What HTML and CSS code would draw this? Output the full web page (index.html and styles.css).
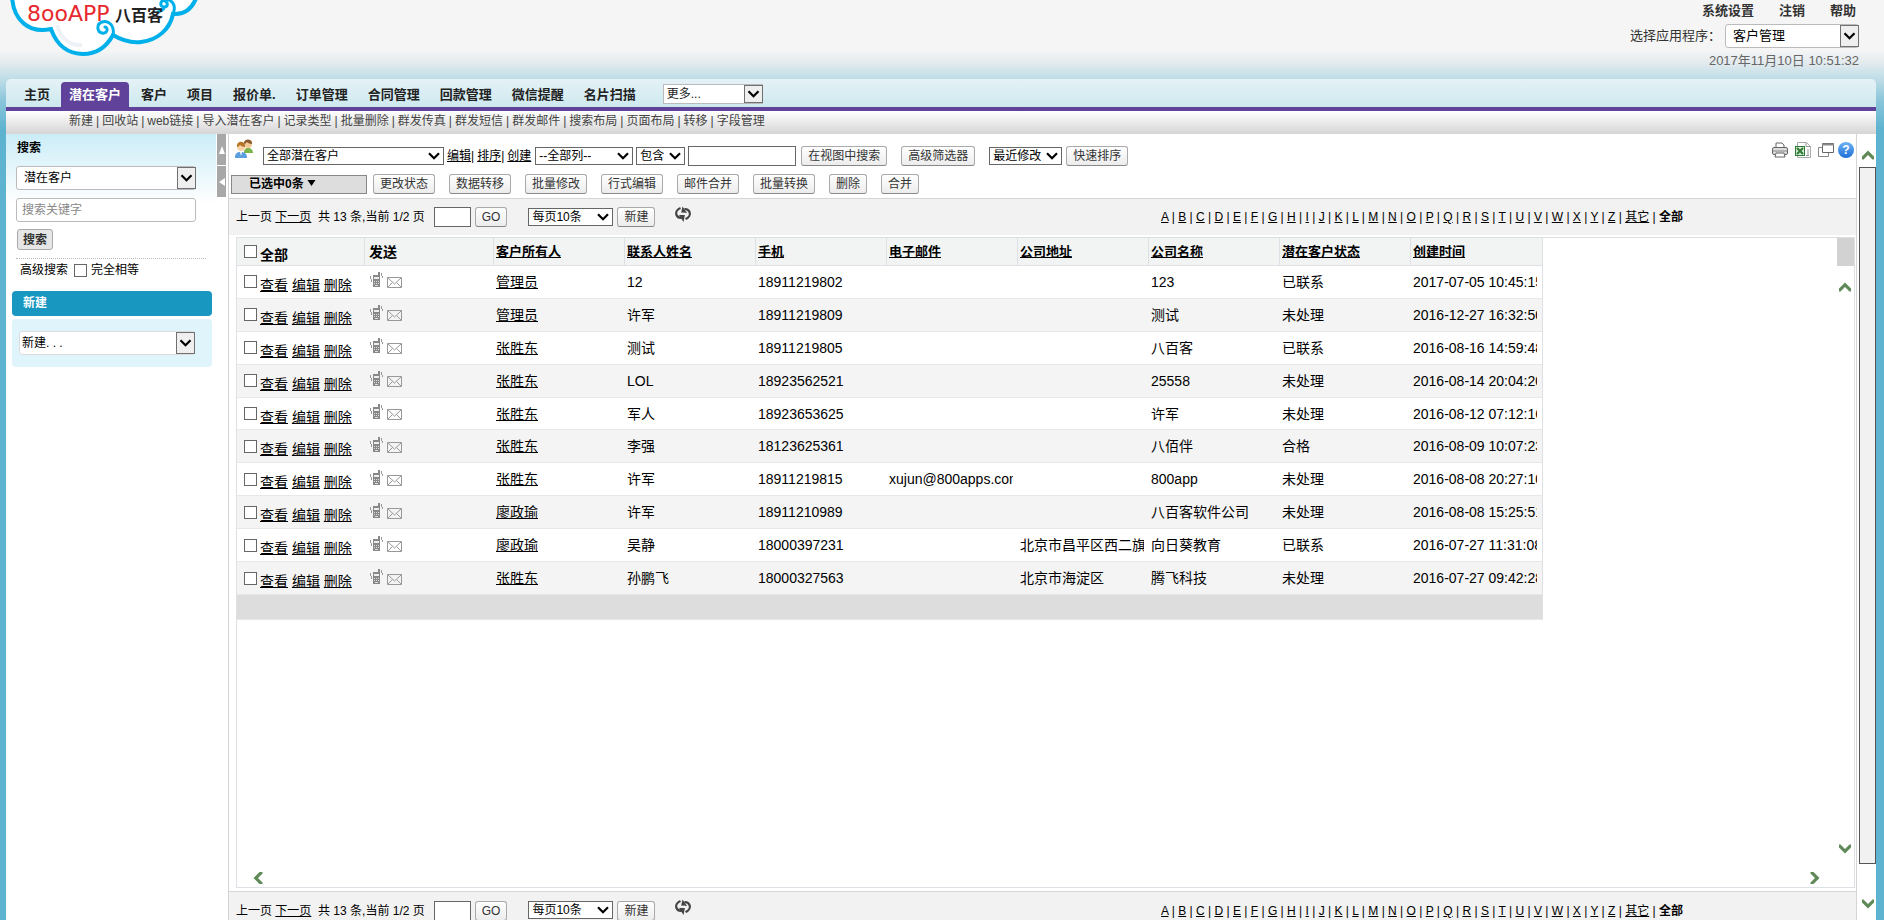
FILE: index.html
```html
<!DOCTYPE html>
<html lang="zh-CN">
<head>
    <meta charset="UTF-8">
    <meta name="viewport" content="width=device-width, initial-scale=1.0">
    <title>潜在客户 - 客户管理</title>
    <link rel="stylesheet" href="styles.css">
</head>
<body>
    <svg class="defs" aria-hidden="true">
        <symbol id="chevron" viewBox="0 0 12 8"><path d="M1 1.2l5 5 5-5" fill="none" stroke="#000" stroke-width="2.2"/></symbol>
        <symbol id="arrow" viewBox="0 0 12 10"><path d="M0 9.5V6.5L6 .5l6 6v3h-1.5L6 5 1.5 9.5z" fill="#5f8a58"/></symbol>
        <symbol id="phone" viewBox="0 0 13 16">
            <path d="M3 3h5V0h2v15H3z" fill="#888"/>
            <path d="M4 5h5v2H4z" fill="#eee"/>
            <path d="M4 9.500h1M6 9.500h1M8 9.500h1M4 11.500h1M6 11.500h1M8 11.500h1M5 13.500h3" stroke="#ddd"/>
            <path d="M.500 4v3M1.500 7v3M11.500 1v3M12.500 4v2" stroke="#999"/>
        </symbol>
        <symbol id="mail" viewBox="0 0 15 11"><path d="M.5.5h14v10H.5zM1 1l6.500 6L14 1M1 10l4.500-4.500M14 10L9.500 5.500" fill="none" stroke="#999"/></symbol>
        <symbol id="refresh" viewBox="0 0 16 16">
            <path d="M5.500 2C2 3.500.500 6.500 1.500 9c.8 2 2.500 3 5 2.800" fill="none" stroke="#444" stroke-width="2.200"/>
            <path d="M10.500 13c3.500-1.500 5-4.500 4-7-.8-2-2.500-3-5-2.800" fill="none" stroke="#444" stroke-width="2.200"/>
            <path d="M4 8.500l6-.5-1.500 7.500zM12 6.500L6 7 7.500 0z" fill="#444" transform="translate(0 .5)"/>
            <path d="M5.500 7.800h5" stroke="#f2f2f2" stroke-width="2.400"/>
        </symbol>
    </svg>

    <header class="top">
        <svg class="logo" viewBox="0 0 200 60" role="img" aria-label="800APP八百客">
            <path d="M12-4C13 20 29 34 51 29C57 46 69 54 83 54S107 46 113 35C123 41 133 43 141 42C158 40 170 29 173 14C184 15 192 10 197-4" fill="#fff" stroke="#00b0ea" stroke-width="4"/>
            <path d="M57 25C60 38 70 46 82 45" fill="none" stroke="#eef2f6" stroke-width="4"/>
            <g fill="none" stroke="#00b0ea" stroke-width="3" stroke-linecap="round">
                <path d="M113 35C115 25 108 20 102 22s-5 10 0 11 7-5 3-6"/>
                <path d="M173 14C177 4 171-1 165 0s-5 7-1 7 4-4 2-5M158 12c3-1 5-2 6-4"/>
            </g>
            <text class="logo-latin" x="27" y="21">8ooAPP</text>
            <text class="logo-cn" x="115" y="21">八百客</text>
        </svg>
        <div class="account">
            <nav class="account-links">
                <a href="#">系统设置</a>
                <a href="#">注销</a>
                <a href="#">帮助</a>
            </nav>
            <div class="app-choice">
                <label for="app">选择应用程序：</label>
                <span class="select boxed app-select">
                    <select id="app"><option>客户管理</option></select>
                    <svg><use href="#chevron"/></svg>
                </span>
            </div>
            <time>2017年11月10日 10:51:32</time>
        </div>
    </header>

    <div class="frame">
        <nav class="tabs">
            <a href="#">主页</a>
            <a href="#" class="active">潜在客户</a>
            <a href="#">客户</a>
            <a href="#">项目</a>
            <a href="#">报价单.</a>
            <a href="#">订单管理</a>
            <a href="#">合同管理</a>
            <a href="#">回款管理</a>
            <a href="#">微信提醒</a>
            <a href="#">名片扫描</a>
            <span class="select boxed more-select">
                <select aria-label="更多"><option>更多...</option></select>
                <svg><use href="#chevron"/></svg>
            </span>
        </nav>
        <nav class="subnav">
            <a href="#">新建</a> | <a href="#">回收站</a> | <a href="#">web链接</a> | <a href="#">导入潜在客户</a> | <a href="#">记录类型</a> | <a href="#">批量删除</a> | <a href="#">群发传真</a> | <a href="#">群发短信</a> | <a href="#">群发邮件</a> | <a href="#">搜索布局</a> | <a href="#">页面布局</a> | <a href="#">转移</a> | <a href="#">字段管理</a>
        </nav>

        <div class="body">
            <aside class="sidebar">
                <form class="search">
                    <h2>搜索</h2>
                    <span class="select boxed side-select">
                        <select aria-label="搜索对象"><option>潜在客户</option></select>
                        <svg><use href="#chevron"/></svg>
                    </span>
                    <input type="text" class="keyword" placeholder="搜索关键字" aria-label="搜索关键字">
                    <button type="button" class="search-btn">搜索</button>
                    <div class="search-more">
                        <a href="#">高级搜索</a>
                        <label><input type="checkbox">完全相等</label>
                    </div>
                </form>
                <h2 class="side-title">新建</h2>
                <div class="side-box">
                    <span class="select boxed new-select">
                        <select aria-label="新建"><option>新建. . .</option></select>
                        <svg><use href="#chevron"/></svg>
                    </span>
                </div>
            </aside>
            <div class="toggles">
                <button type="button" aria-label="收起顶部"><svg viewBox="0 0 6 8"><path d="M3 0l3 8H0z" fill="#fff"/></svg></button>
                <button type="button" aria-label="收起侧栏"><svg viewBox="0 0 6 8"><path d="M0 4l6-4v8z" fill="#fff"/></svg></button>
            </div>

            <main class="content">
                <div class="toolbar">
                    <div class="tool-row">
                        <svg class="users" viewBox="0 0 18 20">
                            <path d="M9 14c0-3 1-5 4-5s5 2 5 5z" fill="#7ab648"/>
                            <circle cx="13" cy="5" r="4" fill="#f3c99a"/>
                            <path d="M9 5c-1-6 9-6 8 0-2 0-4-1-5-2-1 1-2 2-3 2z" fill="#8a5a2b"/>
                            <path d="M0 19c0-5 2-6 6-6s6 2 6 6z" fill="#5b9fe0"/>
                            <circle cx="6" cy="8" r="4" fill="#f8d3a6"/>
                            <path d="M2 8c-1-7 9-7 8 0-2 0-4-1-5-2-1 1-2 2-3 2z" fill="#b5762a"/>
                            <path d="M5 13h2l-1 4z" fill="#fff"/>
                        </svg>
                        <span class="select view-select">
                            <select aria-label="视图"><option>全部潜在客户</option></select>
                            <svg><use href="#chevron"/></svg>
                        </span>
                        <span><a href="#">编辑</a>|</span>
                        <span><a href="#">排序</a>|</span>
                        <a href="#">创建</a>
                        <span class="select column-select">
                            <select aria-label="列"><option>--全部列--</option></select>
                            <svg><use href="#chevron"/></svg>
                        </span>
                        <span class="select match-select">
                            <select aria-label="条件"><option>包含</option></select>
                            <svg><use href="#chevron"/></svg>
                        </span>
                        <input type="text" class="filter" aria-label="筛选内容">
                        <button type="button" class="btn">在视图中搜索</button>
                        <button type="button" class="btn advanced">高级筛选器</button>
                        <span class="select recent-select">
                            <select aria-label="排序方式"><option>最近修改</option></select>
                            <svg><use href="#chevron"/></svg>
                        </span>
                        <button type="button" class="btn">快速排序</button>
                        <div class="page-icons">
                            <a href="#" aria-label="打印"><svg viewBox="0 0 16 16"><path d="M4 6V1h6l2 2v3" fill="#fff" stroke="#666"/><rect x=".5" y="5.500" width="15" height="7" rx="1.500" fill="#ddd" stroke="#666"/><path d="M1 9h14" stroke="#888"/><path d="M4 11h8l1 4H3z" fill="#fff" stroke="#666"/></svg></a>
                            <a href="#" aria-label="导出Excel"><svg viewBox="0 0 16 16"><path d="M2.500.5h9l4 4v11h-13z" fill="#fff" stroke="#aaa"/><path d="M11 .5v4h4.500M13 7v7M11 13.500h3" fill="none" stroke="#999"/><path d="M0 4h10v10H0z" fill="#2f7a35"/><path d="M1 5h8v8H1z" fill="#d5e8d5"/><path d="M2 6l6 6M8 6l-6 6" stroke="#2f7a35" stroke-width="2"/></svg></a>
                            <a href="#" aria-label="新窗口"><svg viewBox="0 0 16 16"><path d="M.5 5.500h10v9H.5z" fill="#fff" stroke="#888"/><path d="M4.500 1.500h11v9h-11z" fill="#fff" stroke="#666"/><path d="M4 2.500h12" stroke="#888" stroke-width="2"/></svg></a>
                            <a href="#" class="help" aria-label="帮助">?</a>
                        </div>
                    </div>
                    <div class="tool-row actions">
                        <button type="button" class="selected">已选中0条 <svg viewBox="0 0 8 6"><path d="M0 0h8L4 6z"/></svg></button>
                        <button type="button" class="btn">更改状态</button>
                        <button type="button" class="btn">数据转移</button>
                        <button type="button" class="btn">批量修改</button>
                        <button type="button" class="btn">行式编辑</button>
                        <button type="button" class="btn">邮件合并</button>
                        <button type="button" class="btn">批量转换</button>
                        <button type="button" class="btn">删除</button>
                        <button type="button" class="btn">合并</button>
                    </div>
                </div>

                <div class="pager"></div>

                <div class="grid">
                    <table>
                        <colgroup>
                            <col class="col-actions"><col class="col-send">
                            <col><col><col><col><col><col><col><col>
                        </colgroup>
                        <thead>
                            <tr>
                                <th class="pick"><label><input type="checkbox"><span>全部</span></label></th>
                                <th class="send">发送</th>
                                <th><a href="#">客户所有人</a></th>
                                <th><a href="#">联系人姓名</a></th>
                                <th><a href="#">手机</a></th>
                                <th><a href="#">电子邮件</a></th>
                                <th><a href="#">公司地址</a></th>
                                <th><a href="#">公司名称</a></th>
                                <th><a href="#">潜在客户状态</a></th>
                                <th><a href="#">创建时间</a></th>
                            </tr>
                        </thead>
                        <tbody id="rows"></tbody>
                        <tfoot><tr><td colspan="10"></td></tr></tfoot>
                    </table>
                    <span class="grid-corner"></span>
                    <svg class="arrow grid-up"><use href="#arrow"/></svg>
                    <svg class="arrow down grid-down"><use href="#arrow"/></svg>
                    <svg class="arrow left grid-left"><use href="#arrow"/></svg>
                    <svg class="arrow right grid-right"><use href="#arrow"/></svg>
                </div>

                <div class="pager bottom"></div>
            </main>

            <div class="scrollbar">
                <svg class="arrow"><use href="#arrow"/></svg>
                <div class="thumb"></div>
                <svg class="arrow down"><use href="#arrow"/></svg>
            </div>
        </div>
    </div>

    <script>
        const leads = [
            ["管理员", "12", "18911219802", "", "", "123", "已联系", "2017-07-05 10:45:15"],
            ["管理员", "许军", "18911219809", "", "", "测试", "未处理", "2016-12-27 16:32:50"],
            ["张胜东", "测试", "18911219805", "", "", "八百客", "已联系", "2016-08-16 14:59:48"],
            ["张胜东", "LOL", "18923562521", "", "", "25558", "未处理", "2016-08-14 20:04:20"],
            ["张胜东", "军人", "18923653625", "", "", "许军", "未处理", "2016-08-12 07:12:16"],
            ["张胜东", "李强", "18123625361", "", "", "八佰伴", "合格", "2016-08-09 10:07:23"],
            ["张胜东", "许军", "18911219815", "xujun@800apps.com", "", "800app", "未处理", "2016-08-08 20:27:10"],
            ["廖政瑜", "许军", "18911210989", "", "", "八百客软件公司", "未处理", "2016-08-08 15:25:51"],
            ["廖政瑜", "吴静", "18000397231", "", "北京市昌平区西二旗", "向日葵教育", "已联系", "2016-07-27 11:31:08"],
            ["张胜东", "孙鹏飞", "18000327563", "", "北京市海淀区", "腾飞科技", "未处理", "2016-07-27 09:42:28"]
        ];

        document.getElementById("rows").innerHTML = leads.map(([owner, ...cells]) => `
            <tr>
                <td class="pick"><div>
                    <input type="checkbox" aria-label="选择">
                    <span><a href="#">查看</a> <a href="#">编辑</a> <a href="#">删除</a></span>
                </div></td>
                <td class="send"><svg class="phone"><use href="#phone"/></svg><svg class="mail"><use href="#mail"/></svg></td>
                <td><a href="#">${owner}</a></td>
                ${cells.map(c => `<td><div class="clip">${c}</div></td>`).join("")}
            </tr>`).join("");

        // The same pager sits above and below the list
        const letters = [..."ABCDEFGHIJKLMNOPQRSTUVWXYZ", "其它"].map(l => `<a href="#">${l}</a>`).join(" | ");
        document.querySelectorAll(".pager").forEach(pager => {
            pager.innerHTML = `
                <span>上一页 <a href="#">下一页</a>&nbsp; 共 13 条,当前 1/2 页</span>
                <input type="text" class="page-no" aria-label="页码">
                <button type="button" class="btn">GO</button>
                <span class="select size-select">
                    <select aria-label="每页条数"><option>每页10条</option></select>
                    <svg><use href="#chevron"/></svg>
                </span>
                <button type="button" class="btn">新建</button>
                <a href="#" class="refresh" aria-label="刷新"><svg><use href="#refresh"/></svg></a>
                <div class="letters">${letters} | <b>全部</b></div>`;
        });
    </script>
</body>
</html>
```
FILE: styles.css
```css
* {
    box-sizing: border-box;
}
body {
    margin: 0;
    height: 100vh;
    overflow: hidden;
    display: flex;
    flex-direction: column;
    font: 12px/16px "Liberation Sans", "Noto Sans CJK SC", sans-serif;
    color: #000;
    background: linear-gradient(#f5f5f5 50px, #e4ebee 62px, #bfdde7 79px, #8cc6db 100px, #5db3d0 130px);
}
a {
    color: inherit;
}
input, select, button {
    font: inherit;
    color: inherit;
    margin: 0;
}
input[type="checkbox"] {
    appearance: none;
    flex: none;
    width: 13px;
    height: 13px;
    border: 1px solid #666;
    background: #fff;
}
.defs {
    position: absolute;
    width: 0;
    height: 0;
}

/* selects */
.select {
    position: relative;
    display: inline-flex;
    flex: none;
    height: 18px;
}
.select select {
    appearance: none;
    width: 100%;
    padding: 0 3px;
    border: 1px solid #666;
    border-radius: 0;
    background: #fff;
}
.select svg {
    position: absolute;
    right: 4px;
    top: 5px;
    width: 12px;
    height: 8px;
    pointer-events: none;
}
.boxed {
    height: 24px;
}
.boxed select {
    border: 1px solid #bbb;
    border-radius: 3px;
}
.boxed svg {
    right: 0;
    top: 1px;
    width: 19px;
    height: 22px;
    padding: 6px 2px;
    border: 1px solid #707070;
    background: #efefef;
}

/* header */
.top {
    display: flex;
    justify-content: space-between;
    height: 79px;
    flex: none;
}
.logo {
    width: 200px;
    height: 60px;
}
.logo-latin {
    font: 22px "DejaVu Sans", sans-serif;
    fill: #e8282d;
}
.logo-cn {
    font: bold 16px "Noto Sans CJK SC", sans-serif;
    fill: #222;
}
.account {
    display: flex;
    flex-direction: column;
    align-items: flex-end;
    padding: 3px 25px 0 0;
    font-size: 13px;
    color: #333;
}
.account-links {
    display: flex;
    gap: 25px;
    padding-right: 3px;
    font-weight: bold;
}
.account-links a {
    text-decoration: none;
}
.app-choice {
    display: flex;
    align-items: center;
    gap: 4px;
    margin: 5px 0;
}
.app-select {
    width: 134px;
}
.app-select select {
    padding-left: 7px;
    color: #000;
}
.account time {
    color: #666;
}

/* tabs */
.frame {
    flex: 1;
    min-height: 0;
    display: flex;
    flex-direction: column;
    margin: 0 8px 0 6px;
}
.tabs {
    display: flex;
    align-items: flex-end;
    height: 32px;
    flex: none;
    padding-left: 8px;
    border-bottom: 4px solid #60429a;
    border-radius: 5px 5px 0 0;
    background: linear-gradient(#e5f2f7, #cde9ee);
    font-size: 13px;
    font-weight: bold;
    color: #222;
}
.tabs a {
    height: 25px;
    padding: 0 10px;
    line-height: 25px;
    text-decoration: none;
}
.tabs .active {
    margin: 0 2px 0 1px;
    padding: 0 8px;
    border-radius: 4px 4px 0 0;
    background: #60429a;
    color: #fff;
}
.more-select {
    width: 100px;
    height: 20px;
    margin: 0 0 3px 17px;
    font-size: 12px;
    font-weight: normal;
}
.more-select select {
    border-radius: 0;
}
.more-select svg {
    height: 18px;
    padding: 4px 2px;
}
.subnav {
    display: flex;
    gap: 3px;
    flex: none;
    height: 23px;
    padding-left: 63px;
    line-height: 20px;
    background: linear-gradient(#fff, #d5d5d5);
    color: #444;
}
.subnav a {
    text-decoration: none;
}

.body {
    flex: 1;
    min-height: 0;
    display: flex;
    background: #fff;
}

/* sidebar */
.sidebar {
    width: 210px;
    flex: none;
    padding: 0 4px 0 6px;
    background: linear-gradient(#cbedf7, #fff 70px);
}
.sidebar h2 {
    margin: 0;
    font-size: 12px;
}
.search {
    display: flex;
    flex-direction: column;
    align-items: flex-start;
    padding: 6px 6px 0 4px;
}
.search h2 {
    padding-left: 1px;
}
.side-select {
    width: 180px;
    margin: 10px 0 8px;
}
.side-select select {
    padding-left: 7px;
}
.keyword {
    width: 180px;
    height: 24px;
    padding: 0 5px;
    border: 1px solid #bbb;
    border-radius: 3px;
}
.keyword::placeholder {
    color: #888;
}
.search-btn {
    width: 36px;
    height: 21px;
    margin: 7px 0 8px 1px;
    padding: 0;
    border: 1px solid #aaa;
    border-radius: 3px;
    background: #e6e6e6;
    color: #333;
    font-weight: bold;
    line-height: 16px;
}
.search-more {
    display: flex;
    gap: 6px;
    align-self: stretch;
    padding: 3px 4px 0;
    border-top: 1px dotted #bbb;
}
.search-more a {
    text-decoration: none;
}
.search-more label {
    display: flex;
    align-items: center;
    gap: 4px;
}
.sidebar .side-title {
    height: 25px;
    margin-top: 13px;
    padding-left: 11px;
    border-radius: 4px;
    background: #1897c1;
    color: #fff;
    line-height: 24px;
}
.side-box {
    margin-top: 3px;
    padding: 12px 7px;
    height: 48px;
    border-radius: 4px;
    background: #e0f4fb;
}
.new-select {
    width: 176px;
}
.new-select select {
    padding-left: 2px;
    border-color: #ddd;
}
.toggles {
    width: 12px;
    flex: none;
    padding-left: 1px;
}
.toggles button {
    display: flex;
    align-items: center;
    justify-content: center;
    width: 9px;
    height: 31px;
    margin-bottom: 1px;
    padding: 0;
    border: 0;
    background: #a8a8a8;
}
.toggles svg {
    width: 6px;
    height: 8px;
}

/* content */
.content {
    flex: 1;
    min-width: 0;
    display: flex;
    flex-direction: column;
    border: solid #d5d5d5;
    border-width: 0 1px;
}
.toolbar {
    height: 64px;
    flex: none;
}
.tool-row {
    position: relative;
    display: flex;
    align-items: center;
    gap: 3px;
    height: 20px;
    margin-top: 12px;
    padding-left: 6px;
}
.actions {
    gap: 14px;
    margin-top: 8px;
    padding-left: 2px;
}
.users {
    width: 18px;
    height: 20px;
    margin: 0 7px 14px 0;
}
.btn {
    flex: none;
    height: 20px;
    padding: 0 6px;
    border: 1px solid #aaa;
    border-bottom-color: #888;
    border-radius: 3px;
    background: linear-gradient(#fff, #ececec);
    color: #333;
    line-height: 16px;
}
.view-select {
    width: 181px;
}
.column-select {
    width: 98px;
    margin-left: 1px;
}
.match-select {
    width: 49px;
}
.filter {
    width: 108px;
    height: 20px;
    margin-right: 2px;
    border: 1px solid #666;
}
.advanced {
    margin: 0 11px;
}
.recent-select {
    width: 73px;
}
.recent-select + .btn {
    margin-left: 1px;
}
.page-icons {
    display: flex;
    gap: 7px;
    margin: 0 2px 13px auto;
}
.page-icons svg {
    display: block;
    width: 16px;
    height: 16px;
}
.help {
    width: 16px;
    height: 16px;
    margin-left: -3px;
    border-radius: 50%;
    background: linear-gradient(#6cb2f5, #1f6fd6);
    color: #fff;
    font-weight: bold;
    text-align: center;
    text-decoration: none;
}
.selected {
    width: 136px;
    height: 19px;
    margin-right: -8px;
    padding: 0 0 0 17px;
    border: 1px solid #888;
    background: #ddd;
    font-weight: bold;
    line-height: 16px;
    text-align: left;
}
.selected svg {
    width: 9px;
    height: 6px;
    margin-bottom: 2px;
}

.pager {
    display: flex;
    align-items: center;
    height: 37px;
    flex: none;
    padding-left: 7px;
    border-top: 1px solid #d5d5d5;
    background: #f2f2f2;
}
.page-no {
    width: 37px;
    height: 20px;
    margin: 0 4px 0 9px;
    border: 1px solid #666;
}
.size-select {
    width: 85px;
    margin: 0 4px 0 21px;
}
.refresh {
    margin: 0 0 6px 20px;
}
.refresh svg {
    display: block;
    width: 16px;
    height: 16px;
}
.letters {
    margin: 0 173px 0 auto;
}
.bottom {
    height: 29px;
    align-items: flex-start;
    padding-top: 9px;
    overflow: hidden;
}
.bottom > span, .bottom .letters {
    padding-top: 2px;
}
.bottom .size-select {
    padding-top: 0;
}
.bottom .refresh {
    margin-top: -2px;
}

/* list */
.grid {
    position: relative;
    flex: 1;
    min-height: 0;
    overflow: hidden;
    margin: 2px 1px 3px 7px;
    border: 1px solid #dde0e4;
}
table {
    width: 1306px;
    height: 382px;
    table-layout: fixed;
    border-spacing: 0;
    border-right: 1px solid #dde0e4;
    font-size: 14px;
}
.col-actions {
    width: 128px;
}
.col-send {
    width: 129px;
}
th, td {
    padding: 0 5px 0 2px;
    border-bottom: 1px solid #e8e8e8;
    text-align: left;
    white-space: nowrap;
}
th {
    height: 28px;
    border-right: 1px solid #dde0e4;
    border-bottom-color: #dde0e4;
    background: #f1f4f3;
    font-size: 13px;
}
th:last-child {
    border-right: 0;
}
tbody tr:nth-child(even) {
    background: #f4f4f4;
}
tfoot td {
    height: 25px;
    background: #ddd;
}
.clip {
    overflow: hidden;
}
.pick {
    padding: 0 0 0 7px;
}
.pick div, .pick label {
    display: flex;
    align-items: center;
    gap: 3px;
}
.pick span {
    padding-top: 6px;
}
.pick label {
    font-size: 14px;
}
.send {
    padding-left: 4px;
    font-size: 14px;
}
.phone {
    width: 13px;
    height: 16px;
    margin: 0 4px 0 1px;
}
.mail {
    width: 15px;
    height: 11px;
}
.grid-corner {
    position: absolute;
    top: 0;
    right: 0;
    width: 17px;
    height: 28px;
    background: #d2d2d2;
}
.arrow {
    width: 12px;
    height: 10px;
}
.down {
    transform: rotate(180deg);
}
.left {
    transform: rotate(-90deg);
}
.right {
    transform: rotate(90deg);
}
.grid .arrow {
    position: absolute;
}
.grid-up {
    top: 44px;
    right: 3px;
}
.grid-down {
    bottom: 33px;
    right: 3px;
}
.grid-left {
    bottom: 4px;
    left: 15px;
}
.grid-right {
    bottom: 4px;
    right: 33px;
}

.scrollbar {
    width: 19px;
    flex: none;
    display: flex;
    flex-direction: column;
    align-items: center;
    padding: 16px 0 11px 2px;
}
.thumb {
    flex: 1;
    width: 17px;
    margin: 7px 0 35px;
    border: 1px solid #555;
    background: #f1f1f1;
}
```
